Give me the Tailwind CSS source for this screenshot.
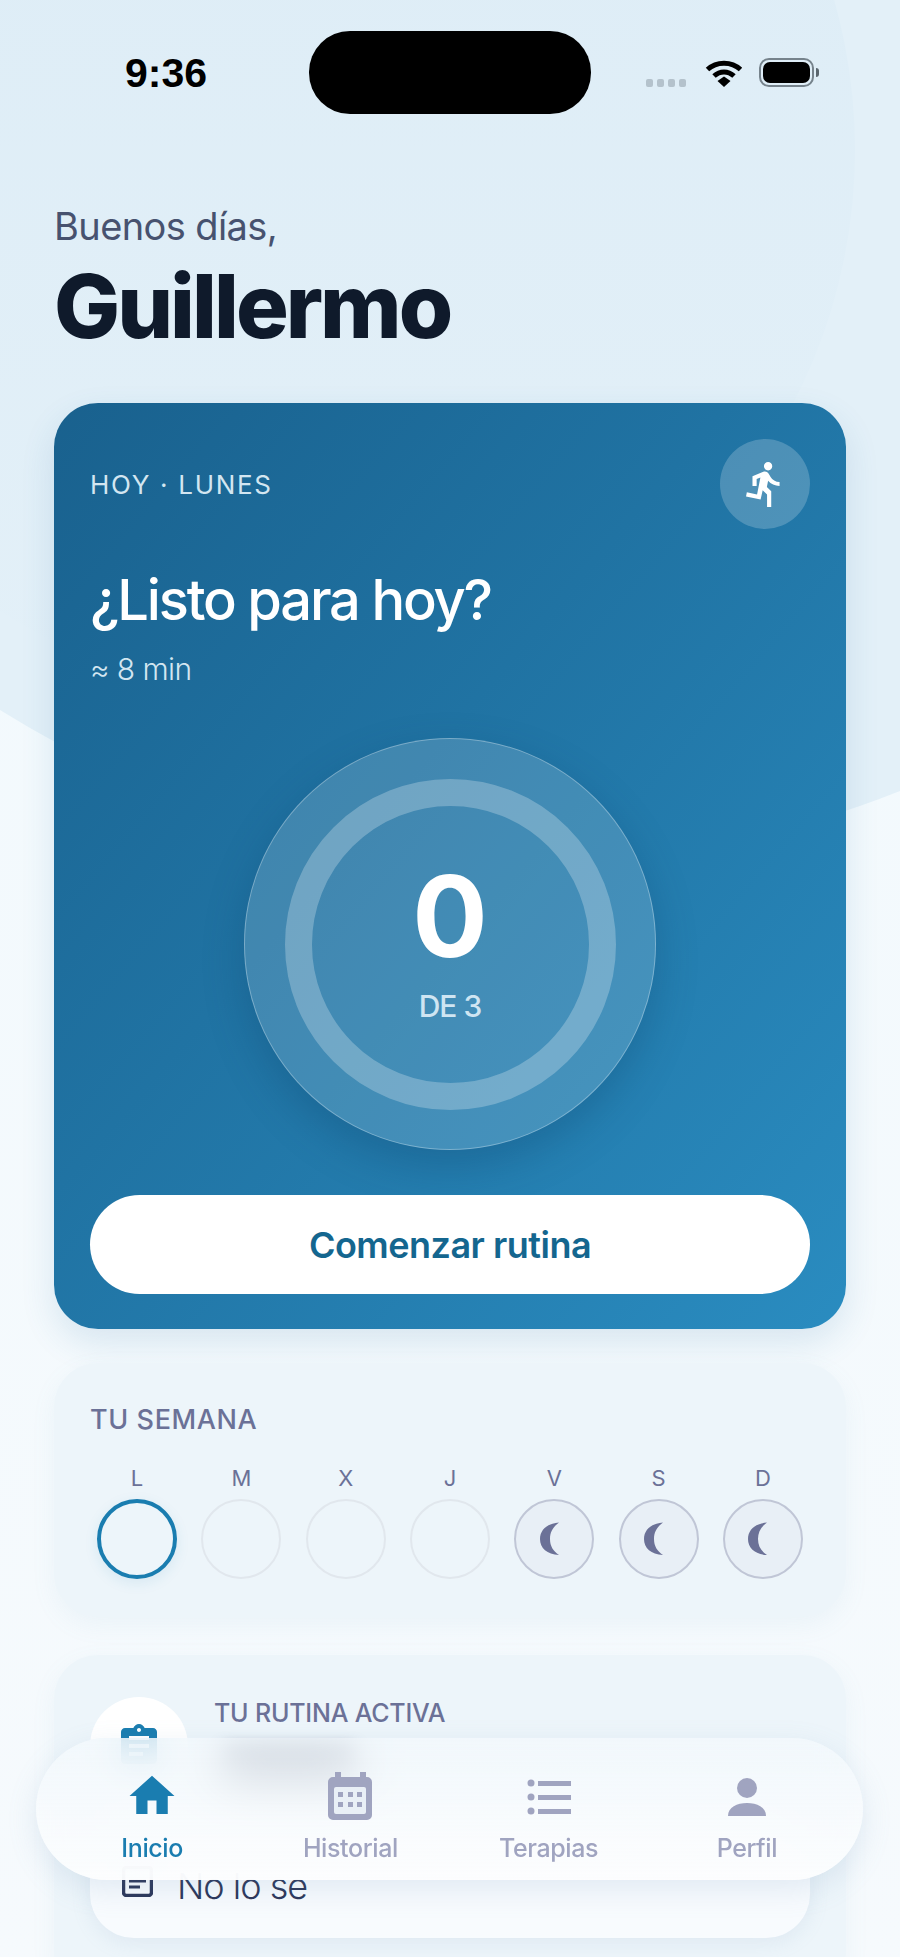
<!DOCTYPE html>
<html lang="es">
<head>
  <meta charset="UTF-8" />
  <title>Inicio</title>
  <script src="https://cdn.jsdelivr.net/npm/@tailwindcss/browser@4"></script>
</head>
<body class="bg-[#f4f9fd] font-['Inter',sans-serif]">
  <div class="relative w-[900px] h-[1957px] overflow-hidden bg-gradient-to-b from-[#f1f9fd] to-[#f6fafd]">
    <!-- fondo -->
    <div class="absolute left-[-470px] top-[-1138px] w-[2000px] h-[2000px] rounded-full bg-[#e3f0f8]"></div>
    <div class="absolute left-[-250px] top-[-400px] w-[1105px] h-[1100px] rounded-full bg-gradient-to-b from-[#dcecf6] to-[#e3f0f8]"></div>

    <div class="relative">
      <!-- status bar -->
      <div class="grid grid-cols-[1fr_282px_1fr] pt-[31px] h-[204px]">
        <div class="pl-[125px] pt-[22px] text-[41px] leading-[40px] font-bold text-black font-['Liberation_Sans',sans-serif]">9:36</div>
        <div class="h-[83px] rounded-[41px] bg-black"></div>
        <div class="flex items-start pl-[55px] pt-[27px]">
          <div class="flex gap-[4px] mt-[21px]">
            <span class="w-[7px] h-[8px] rounded-[2px] bg-[#b4c2cc]"></span>
            <span class="w-[7px] h-[8px] rounded-[2px] bg-[#b4c2cc]"></span>
            <span class="w-[7px] h-[8px] rounded-[2px] bg-[#b4c2cc]"></span>
            <span class="w-[7px] h-[8px] rounded-[2px] bg-[#b4c2cc]"></span>
          </div>
          <svg class="ml-[19px]" width="38" height="29" viewBox="0 0 38 29" fill="none">
            <path d="M2.5 11.500C11.500 3 26.500 3 35.500 11.500" stroke="#000" stroke-width="5"/>
            <path d="M9 18C15 12.500 23 12.500 29 18" stroke="#000" stroke-width="5"/>
            <path d="M12.500 23L19 18.500L25.500 23L19 29Z" fill="#000"/>
          </svg>
          <div class="relative ml-[16px] w-[55px] h-[29px] rounded-[10px] border-2 border-[#76838c] p-[2px]">
            <div class="w-full h-full rounded-[7px] bg-black"></div>
            <span class="absolute right-[-7px] top-[8px] w-[3px] h-[9px] rounded-r-full bg-[#5a666e]"></span>
          </div>
        </div>
      </div>

      <main class="px-[54px]">
        <p class="text-[38px] leading-[44px] text-[#47526f] tracking-[-0.6px]">Buenos días,</p>
        <h1 class="mt-[16px] text-[88px] leading-[84px] font-extrabold text-[#0f1a2b] tracking-[-3px]">Guillermo</h1>

        <!-- tarjeta de hoy -->
        <section class="mt-[55px] h-[926px] rounded-[44px] bg-gradient-to-br from-[#19618e] to-[#2a8cc0] p-[36px] shadow-[0_14px_34px_rgba(40,110,160,0.14)]">
          <div class="flex justify-between">
            <span class="mt-[28px] text-[26px] leading-[36px] tracking-[1.7px] text-[#d3e6f1]">HOY · LUNES</span>
            <div class="w-[90px] h-[90px] rounded-full bg-white/20 flex items-center justify-center">
              <svg width="50" height="50" viewBox="0 0 24 24" fill="#fff"><path d="M13.49 5.48c1.1 0 2-.9 2-2s-.9-2-2-2-2 .9-2 2 .9 2 2 2zm-3.6 13.900l1-4.400 2.100 2v6h2v-7.500l-2.100-2 .6-3c1.300 1.500 3.300 2.500 5.500 2.500v-2c-1.900 0-3.500-1-4.300-2.400l-1-1.600c-.4-.6-1-1-1.700-1-.3 0-.5.1-.8.1l-5.200 2.200v4.700h2v-3.400l1.800-.7-1.600 8.100-4.900-1-.4 2 7 1.400z"/></svg>
            </div>
          </div>
          <h2 class="mt-[38px] text-[56px] leading-[66px] font-medium text-white tracking-[-2.2px]">¿Listo para hoy?</h2>
          <p class="mt-[16px] text-[30px] leading-[40px] font-light text-[#d3e6f1] tracking-[-0.6px]">≈ 8 min</p>

          <div class="mt-[49px] mx-auto w-[412px] h-[412px] rounded-full bg-white/15 border border-white/30 flex items-center justify-center shadow-[0_16px_40px_rgba(10,60,100,0.28)]">
            <div class="w-[331px] h-[331px] rounded-full border-[27px] border-white/25 flex flex-col items-center justify-center pb-[5px]">
              <span class="text-[112px] leading-[112px] font-bold text-white">0</span>
              <span class="mt-[16px] text-[30px] leading-[36px] font-medium text-[#cfe5f2] tracking-[-1px]">DE 3</span>
            </div>
          </div>

          <button class="mt-[45px] w-full h-[99px] rounded-full bg-white text-[36px] font-semibold text-[#14668f] tracking-[-0.5px]">Comenzar rutina</button>
        </section>

        <!-- semana -->
        <section class="mt-[34px] h-[254px] rounded-[44px] bg-[#edf5fa] px-[36px] pt-[39px] shadow-[0_8px_24px_rgba(120,160,190,0.08)]">
          <h3 class="text-[27px] leading-[36px] font-medium tracking-[0.6px] text-[#6b7197]">TU SEMANA</h3>
          <div class="mt-[26px] px-[7px] flex justify-between">
            <div class="w-[80px] flex flex-col items-center gap-[7px]">
              <span class="text-[22px] leading-[28px] text-[#6b7197]">L</span>
              <span class="w-[80px] h-[80px] rounded-full border-[4px] border-[#1a7db0] shadow-[0_4px_14px_rgba(26,125,176,0.10)]"></span>
            </div>
            <div class="w-[80px] flex flex-col items-center gap-[7px]">
              <span class="text-[22px] leading-[28px] text-[#6b7197]">M</span>
              <span class="w-[80px] h-[80px] rounded-full border-2 border-[#e1e7ed]"></span>
            </div>
            <div class="w-[80px] flex flex-col items-center gap-[7px]">
              <span class="text-[22px] leading-[28px] text-[#6b7197]">X</span>
              <span class="w-[80px] h-[80px] rounded-full border-2 border-[#e1e7ed]"></span>
            </div>
            <div class="w-[80px] flex flex-col items-center gap-[7px]">
              <span class="text-[22px] leading-[28px] text-[#6b7197]">J</span>
              <span class="w-[80px] h-[80px] rounded-full border-2 border-[#e1e7ed]"></span>
            </div>
            <div class="w-[80px] flex flex-col items-center gap-[7px]">
              <span class="text-[22px] leading-[28px] text-[#6b7197]">V</span>
              <span class="w-[80px] h-[80px] rounded-full border-2 border-[#c0c6d6] bg-[#e8eff6] flex items-center justify-center">
                <svg class="mr-[9px]" width="22" height="34" viewBox="0 0 22 34" fill="#6b7197"><path d="M20 .5C8 1.500 1 8 1 17s7 15.500 19 16c-6-4-9-9-9-16S14 5 20 .5z"/></svg>
              </span>
            </div>
            <div class="w-[80px] flex flex-col items-center gap-[7px]">
              <span class="text-[22px] leading-[28px] text-[#6b7197]">S</span>
              <span class="w-[80px] h-[80px] rounded-full border-2 border-[#c0c6d6] bg-[#e8eff6] flex items-center justify-center">
                <svg class="mr-[9px]" width="22" height="34" viewBox="0 0 22 34" fill="#6b7197"><path d="M20 .5C8 1.500 1 8 1 17s7 15.500 19 16c-6-4-9-9-9-16S14 5 20 .5z"/></svg>
              </span>
            </div>
            <div class="w-[80px] flex flex-col items-center gap-[7px]">
              <span class="text-[22px] leading-[28px] text-[#6b7197]">D</span>
              <span class="w-[80px] h-[80px] rounded-full border-2 border-[#c0c6d6] bg-[#e8eff6] flex items-center justify-center">
                <svg class="mr-[9px]" width="22" height="34" viewBox="0 0 22 34" fill="#6b7197"><path d="M20 .5C8 1.500 1 8 1 17s7 15.500 19 16c-6-4-9-9-9-16S14 5 20 .5z"/></svg>
              </span>
            </div>
          </div>
        </section>

        <!-- rutina activa -->
        <section class="mt-[38px] h-[340px] rounded-[44px] bg-[#edf5fa] px-[36px] pt-[42px] shadow-[0_8px_24px_rgba(120,160,190,0.08)]">
          <div class="flex gap-[26px]">
            <div class="w-[98px] h-[98px] rounded-full bg-white flex items-center justify-center">
              <svg width="48" height="48" viewBox="0 0 24 24" fill="#1a7db0"><path d="M19 3h-4.180C14.400 1.840 13.300 1 12 1s-2.400.84-2.820 2H5c-1.100 0-2 .9-2 2v14c0 1.100.9 2 2 2h14c1.100 0 2-.9 2-2V5c0-1.100-.9-2-2-2zm-7 0c.55 0 1 .45 1 1s-.45 1-1 1-1-.45-1-1 .45-1 1-1zm2 14H7v-2h7v2zm3-4H7v-2h10v2zm0-4H7V7h10v2z"/></svg>
            </div>
            <div>
              <p class="text-[25px] leading-[32px] font-medium text-[#6b7197] tracking-[-0.2px]">TU RUTINA ACTIVA</p>
              <div class="mt-[20px] ml-[10px] w-[130px] h-[36px] bg-[#1e2a4a]/80 blur-[8px]"></div>
            </div>
          </div>
          <div class="mt-[15px] h-[128px] rounded-[44px] bg-[#f8fbfe] pl-[32px] pt-[54px] flex items-start gap-[24px] shadow-[0_6px_20px_rgba(120,160,190,0.12)]">
            <svg class="mt-[2px]" width="31" height="31" viewBox="0 0 31 31" fill="none"><rect x="1.500" y="1.500" width="28" height="28" rx="3" stroke="#2a3558" stroke-width="3.500"/><path d="M7 15h17M7 21h11" stroke="#2a3558" stroke-width="3"/></svg>
            <span class="text-[36px] leading-[44px] font-light text-[#2a3558] tracking-[-1px]">No lo se</span>
          </div>
        </section>
      </main>
    </div>

    <!-- barra inferior -->
    <nav class="absolute left-[36px] top-[1738px] w-[827px] h-[142px] rounded-full bg-gradient-to-b from-[#f2f8fc]/80 to-[#fcfdfe]/95 backdrop-blur-[20px] px-[17px] grid grid-cols-4 shadow-[0_10px_30px_rgba(110,150,185,0.16)]">
      <div class="flex flex-col items-center pt-[31px]">
        <svg width="54" height="54" viewBox="0 0 24 24" fill="#1a7db0"><path d="M10 20v-6h4v6h5v-8h3L12 3 2 12h3v8z"/></svg>
        <span class="mt-[9px] text-[25px] leading-[32px] font-medium text-[#1a7db0] tracking-[-0.4px]">Inicio</span>
      </div>
      <div class="flex flex-col items-center pt-[31px]">
        <svg width="54" height="54" viewBox="0 0 54 54" fill="#a0a4c0"><path d="M12 3h6v5h19V3h6v5h1a5 5 0 0 1 5 5v33a5 5 0 0 1-5 5H10a5 5 0 0 1-5-5V13a5 5 0 0 1 5-5h2z"/><rect x="11" y="18" width="32" height="27" rx="2" fill="#e9eff6"/><path d="M15 23h5v5h-5zM25 23h5v5h-5zM34 23h5v5h-5zM15 33h5v5h-5zM25 33h5v5h-5zM34 33h5v5h-5z"/></svg>
        <span class="mt-[9px] text-[25px] leading-[32px] font-medium text-[#a0a4c0] tracking-[-0.4px]">Historial</span>
      </div>
      <div class="flex flex-col items-center pt-[31px]">
        <svg width="54" height="54" viewBox="0 0 54 54" fill="#a0a4c0"><circle cx="9" cy="14" r="3.500"/><circle cx="9" cy="28" r="3.500"/><circle cx="9" cy="42" r="3.500"/><rect x="16" y="12" width="33" height="5"/><rect x="16" y="26" width="33" height="5"/><rect x="16" y="40" width="33" height="5"/></svg>
        <span class="mt-[9px] text-[25px] leading-[32px] font-medium text-[#a0a4c0] tracking-[-0.4px]">Terapias</span>
      </div>
      <div class="flex flex-col items-center pt-[31px]">
        <svg width="54" height="54" viewBox="0 0 54 54" fill="#a0a4c0"><circle cx="27" cy="19" r="10"/><path d="M8 47c0-9 9-13 19-13s19 4 19 13z"/></svg>
        <span class="mt-[9px] text-[25px] leading-[32px] font-medium text-[#a0a4c0] tracking-[-0.4px]">Perfil</span>
      </div>
    </nav>
  </div>
</body>
</html>
